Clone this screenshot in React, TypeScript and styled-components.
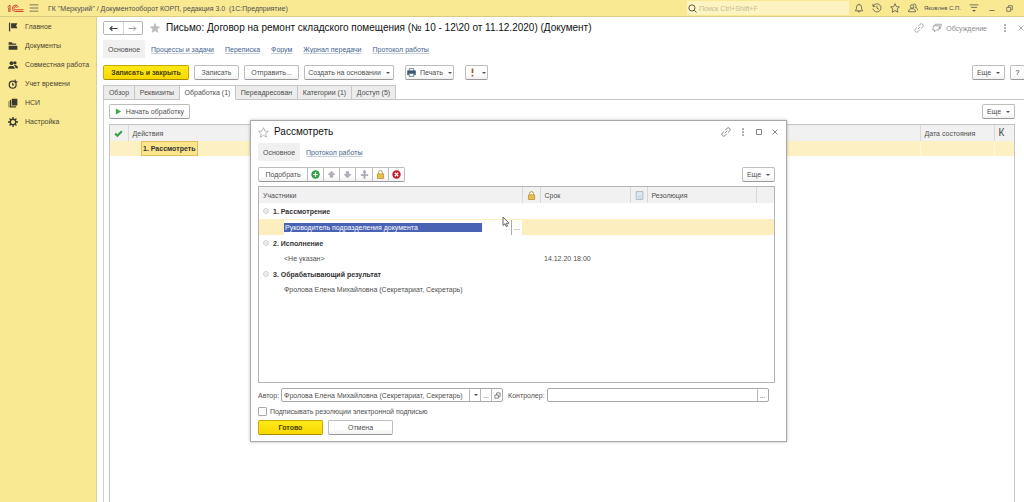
import React from 'react';
import styled, { createGlobalStyle, css } from 'styled-components';

const Global = createGlobalStyle`
  * { box-sizing: border-box; }
  body { margin: 0; font: 7px/9px "Liberation Sans", Arial, sans-serif; color: #4f4f4f; background: #fff; }
  button, input { font: inherit; color: inherit; margin: 0; }
  button { cursor: pointer; }
  svg { display: block; flex: none; }
`;

const Page = styled.div`
  position: relative;
  display: flex;
  flex-direction: column;
  min-height: 100vh;
  overflow: hidden;
`;

const PlainButton = styled.button`
  display: flex;
  align-items: center;
  justify-content: center;
  padding: 0;
  border: 0;
  background: none;
`;

const TopBar = styled.header`
  display: flex;
  align-items: center;
  height: 17px;
  padding: 0 10px 0 7px;
  background: #fae993;
  border-bottom: 1px solid #d9cb82;
`;
const AppTitle = styled.span`
  flex: 1;
  margin-left: 9px;
  white-space: nowrap;
`;
const Menu = styled(PlainButton)`
  margin-left: 5px;
`;
const Search = styled.label`
  display: flex;
  align-items: center;
  gap: 2px;
  width: 162px;
  height: 14px;
  padding-left: 1px;
  background: #fdf4c1;
  margin-right: 5px;
`;
const SearchInput = styled.input`
  flex: 1;
  min-width: 0;
  padding: 0;
  border: 0;
  outline: 0;
  background: none;
  &::placeholder { color: #c4bc94; opacity: 1; }
`;
const BarIcons = styled.div`
  display: flex;
  align-items: center;
  gap: 8px;
`;
const User = styled.span`
  width: 37px;
  margin-left: -2px;
  font-size: 6px;
  white-space: nowrap;
`;

const Body = styled.div`
  display: flex;
  flex: 1;
`;
const Sidebar = styled.nav`
  flex: none;
  width: 97px;
  background: #fae993;
  border-right: 1px solid #d9cf9a;
`;
const SideLink = styled.a`
  display: flex;
  align-items: center;
  gap: 7px;
  height: 19px;
  padding-left: 8px;
  color: #4a4630;
  text-decoration: none;
  white-space: nowrap;
`;

const Main = styled.main`
  display: flex;
  flex-direction: column;
  flex: 1;
  min-width: 0;
  padding-top: 4px;
`;
const TitleRow = styled.div`
  display: flex;
  align-items: center;
  height: 14px;
  padding-left: 6px;
`;
const History = styled.div`
  display: flex;
  width: 40px;
  height: 14px;
  margin-right: 6px;
  border: 1px solid #b5b5b5;
  border-radius: 2px;
  & > button { flex: 1; }
  & > button + button { border-left: 1px solid #d5d5d5; }
`;
const Title = styled.h1`
  flex: 1;
  margin: 0 0 0 5px;
  font-size: 10px;
  line-height: 14px;
  font-weight: 400;
  color: #111;
  white-space: nowrap;
`;
const TitleTools = styled.div`
  display: flex;
  align-items: center;
  gap: 8px;
  margin-right: -1px;
  color: #8d8d8d;
`;
const Discuss = styled(PlainButton)`
  gap: 4px;
  margin-right: 6px;
`;

const Nav = styled.nav<{ $gap: number }>`
  display: flex;
  align-items: center;
  gap: ${p => p.$gap}px;
`;
const MainNav = styled(Nav)`
  margin: 5px 0 7px 6px;
`;
const NavCurrent = styled.span`
  padding: 5px 5px 4px;
  margin-right: -5px;
  background: #f0f0f0;
`;
const NavLink = styled.a`
  color: #44638f;
  text-decoration: underline #c3cfde 1px;
  text-underline-offset: 1px;
  white-space: nowrap;
`;

const Button = styled.button<{ $w: number; $primary?: boolean }>`
  display: flex;
  align-items: center;
  justify-content: center;
  gap: 4px;
  flex: none;
  width: ${p => p.$w}px;
  height: 15px;
  padding: 0;
  border: 1px solid #bdbdbd;
  border-bottom-color: #999;
  border-radius: 2px;
  background: linear-gradient(#fff 60%, #f1f1f1);
  white-space: nowrap;
  ${p => p.$primary && css`
    font-weight: 700;
    color: #4a4000;
    border-color: #c9a800;
    border-bottom-color: #a58a00;
    background: linear-gradient(#ffe91a, #f8d800);
  `}
`;
const CommandBar = styled.div`
  display: flex;
  gap: 5px;
  padding-left: 6px;
`;
const Gap = styled.span<{ $grow?: boolean }>`
  ${p => (p.$grow ? 'flex: 1;' : 'width: 1px;')}
`;
const Clip = styled(Button)`
  margin-right: -1px;
  color: #222;
`;

const Tabs = styled.div`
  display: flex;
  height: 15px;
  margin: 5px 0 0 6px;
  border-bottom: 1px solid #c6c6c6;
`;
const Tab = styled.button<{ $w: number; $on?: boolean }>`
  width: ${p => p.$w}px;
  height: 15px;
  padding: 0;
  border: 1px solid #c6c6c6;
  border-left-width: 0;
  background: ${p => (p.$on ? '#fff' : '#ececec')};
  white-space: nowrap;
  ${p => p.$on && 'border-bottom-color: #fff;'}
  &:first-child { border-left-width: 1px; }
`;

const Panel = styled.section`
  display: flex;
  flex-direction: column;
  flex: 1;
  margin-left: 6px;
  padding: 4px 9px 0 5px;
  border-left: 1px solid #cfcfcf;
`;
const Split = styled.div`
  display: flex;
  justify-content: space-between;
`;

const Table = styled.table`
  width: 100%;
  border-collapse: collapse;
  table-layout: fixed;
  th, td { padding: 0 0 0 4px; text-align: left; font-weight: 400; white-space: nowrap; }
  th { height: 16px; background: #f1f1f1; border-right: 1px solid #d8d8d8; }
  th:last-child { border-right: 0; }
`;
const ActionsFrame = styled.div`
  flex: 1;
  margin-top: 5px;
  border: 1px solid #c4c4c4;
  border-bottom: 0;
`;
const ActionRow = styled.tr`
  height: 15px;
  background: #fdf0c3;
  & > td + td + td { border-left: 1px solid #fff8e0; }
`;
const Mark = styled.span`
  font-size: 10px;
  line-height: 10px;
  color: #444;
`;
const Marked = styled.span`
  display: block;
  width: max-content;
  margin-left: 9px;
  padding: 2px 2px 2px 1px;
  font-weight: 700;
  background: #fce48c;
  border: 1px solid #dfc05a;
  color: #333;
`;

const Dialog = styled.section`
  position: absolute;
  top: 120px;
  left: 250px;
  width: 537px;
  padding: 4px 11px 6px 7px;
  background: #fff;
  border: 1px solid #a9a9a9;
  box-shadow: 0 0 3px #0004;
`;
const DialogHead = styled.div`
  display: flex;
  align-items: center;
  height: 14px;
  gap: 5px;
`;
const DialogTitle = styled.h2`
  flex: 1;
  margin: 0;
  font-size: 10px;
  line-height: 14px;
  font-weight: 400;
  color: #111;
`;
const WindowTools = styled.div`
  display: flex;
  align-items: center;
  gap: 8px;
  margin-right: -4px;
  color: #666;
`;
const DialogNav = styled(Nav)`
  margin: 4px 0 6px;
`;
const Group = styled.div`
  display: flex;
  & > button { border-radius: 0; border-right-width: 0; }
  & > button:first-child { border-radius: 2px 0 0 2px; }
  & > button:last-child { border-radius: 0 2px 2px 0; border-right-width: 1px; }
`;
const MembersFrame = styled.div`
  height: 197px;
  margin-top: 4px;
  border: 1px solid #b4b4b4;
`;
const StageRow = styled.tr`
  height: 16px;
`;
const MemberRow = styled.tr<{ $on?: boolean }>`
  height: ${p => (p.$on ? 16 : 15)}px;
  ${p => p.$on && 'background: #fdeec0;'}
`;
const Stage = styled.b`
  display: flex;
  align-items: center;
  gap: 4px;
  color: #333;
`;
const Member = styled.span`
  display: block;
  padding-left: 21px;
`;
const EditCell = styled.div`
  display: flex;
  align-items: center;
  height: 15px;
  margin-left: 21px;
  background: #fff;
`;
const EditInput = styled.input`
  width: 198px;
  height: 9px;
  padding: 0 0 0 1px;
  border: 0;
  outline: 0;
  color: #fff;
  background: #4a62b4;
`;
const EditMore = styled(PlainButton)`
  width: 11px;
  height: 15px;
  margin-left: auto;
  border-left: 1px solid #aaa;
`;

const Fields = styled.div`
  display: flex;
  align-items: center;
  margin-top: 5px;
`;
const FieldLabel = styled.label`
  margin-right: 2px;
  white-space: nowrap;
`;
const Field = styled.div`
  display: flex;
  width: 222px;
  height: 14px;
  margin-right: 5px;
  border: 1px solid #a8a8a8;
  border-radius: 2px;
  & > input { flex: 1; min-width: 0; padding: 0 0 0 2px; border: 0; outline: 0; background: none; }
  & > button { width: 11px; border-left: 1px solid #b8b8b8; }
`;
const Check = styled.label`
  display: flex;
  align-items: center;
  gap: 3px;
  margin-top: 5px;
  & > input {
    appearance: none;
    width: 9px;
    height: 9px;
    border: 1px solid #aaa;
    border-radius: 1px;
  }
`;
const Actions = styled.div`
  display: flex;
  gap: 5px;
  margin-top: 4px;
`;
const Pointer = styled.svg`
  position: absolute;
  top: 95px;
  left: 251px;
`;
const Caret = styled.i`
  border: 2px solid transparent;
  border-top-color: currentColor;
  border-bottom-width: 0;
  margin-left: 1px;
`;

type IconProps = { s?: number; children: React.ReactNode; color?: string; sw?: number };
const Icon = ({ s = 10, children, color = 'currentColor', sw = 1.2 }: IconProps) => (
  <svg width={s} height={s} viewBox="0 0 16 16" fill="none" stroke={color} strokeWidth={sw} aria-hidden="true">
    {children}
  </svg>
);
const starPath = 'M8 1l2.1 4.8 5 .5-3.8 3.4 1.2 5.1L8 12.100l-4.500 2.700 1.200-5.100L.9 6.300l5-.5z';

const Logo = () => (
  <svg width="17" height="9" viewBox="0 0 34 18" fill="none" stroke="#d4442f" strokeWidth="2" aria-label="1C">
    <path d="M1 6l5-4v14M3.500 7v9" />
    <path d="M23 6.500a6.300 6.300 0 1 0-6 8.500H33M19.800 7.500a3 3 0 1 0-2.800 4H33" />
  </svg>
);
const Link = () => (
  <Icon sw={1.2}>
    <path d="M6 10l4-4M7 5l2.500-2.800a2.900 2.900 0 0 1 4.300 4.200L11 9M9 11l-2.500 2.800a2.900 2.900 0 0 1-4.300-4.200L5 7" />
  </Icon>
);
const Dots = () => (
  <Icon s={8} color="none"><g fill="#666"><circle cx="8" cy="2" r="1.700" /><circle cx="8" cy="8" r="1.700" /><circle cx="8" cy="14" r="1.700" /></g></Icon>
);
const Close = () => <Icon s={8} sw={1.5}><path d="M3 3l10 10M13 3L3 13" /></Icon>;
const Lock = () => (
  <Icon s={9} color="#b8923a" sw={1.6}><path d="M4.500 7V4.500a3.500 3.500 0 0 1 7 0V7" /><path fill="#f0ca55" d="M2.500 7h11v8h-11z" /><path d="M3 11h10" stroke="#dcb040" /></Icon>
);
const Minus = () => (
  <Icon s={6} color="#999" sw={1.4}><circle cx="8" cy="8" r="6.500" fill="#fff" /><path d="M4.500 8h7" /></Icon>
);
const Arrow = ({ d }: { d: string }) => (
  <Icon s={9} color="#999da5" sw={1}><path fill="#aeb2ba" d={d} /></Icon>
);

const sideItems: [string, React.ReactNode][] = [
  ['Главное', <><path d="M2.500 1v14" strokeWidth="2" /><path d="M5 2h10l-2 4 2 4H5z" fill="#3c3a30" stroke="none" /></>],
  ['Документы', <path d="M1 2h5l1.500 2H13v2H1zM1 7.500h14V14H1z" fill="#3c3a30" stroke="none" />],
  ['Совместная работа', <g fill="#3c3a30" stroke="none"><circle cx="5.500" cy="5" r="3" /><circle cx="11" cy="4.500" r="2.700" /><path d="M0 14c0-3 2-4 4-4.500h3c2 .5 4 1.500 4 4.500zM9 8h3c2.500 1 4 2 4 5h-4c0-2-1-3.500-3-5z" /></g>],
  ['Учет времени', <><circle cx="7.500" cy="9" r="5.500" strokeWidth="2" /><path d="M7.500 6v3.500H10M11 1l1 3 3 1" strokeWidth="1.800" /></>],
  ['НСИ', <g fill="#3c3a30" stroke="none"><path d="M6 1h9v11H6zM3 3h2v10h8v2H3zM1 5h1v10H1z" /></g>],
  ['Настройка', <><circle cx="8" cy="8" r="4.500" strokeWidth="2.400" /><path d="M8 0v4M8 12v4M0 8h4M12 8h4M2.500 2.500l2.500 2.500M11 11l2.500 2.500M13.500 2.500L11 5M5 11l-2.500 2.500" strokeWidth="2.200" /></>],
];

export default function App() {
  return (
    <Page>
      <Global />
      <TopBar>
        <Logo />
        <Menu aria-label="Меню"><Icon><path d="M1 3h14M1 8h14M1 13h14" /></Icon></Menu>
        <AppTitle>ГК "Меркурий" / Документооборот КОРП, редакция 3.0&nbsp; (1С:Предприятие)</AppTitle>
        <Search>
          <Icon s={9} sw={1.7}><circle cx="7" cy="7" r="5.500" /><path d="M11 11l4 4" /></Icon>
          <SearchInput placeholder="Поиск Ctrl+Shift+F" aria-label="Поиск" />
        </Search>
        <BarIcons>
          <PlainButton aria-label="Уведомления"><Icon><path d="M2 12.500c2-2 2-4 2-6a4 4 0 0 1 8 0c0 2 0 4 2 6zM6.500 13a1.500 1.500 0 0 0 3 0M8 1v2" /></Icon></PlainButton>
          <PlainButton aria-label="История"><Icon><path d="M2 5a6.500 6.500 0 1 1-.5 4M1.500 1.500V5.500H5.500M8 4.500V8.500l3 1.500" /></Icon></PlainButton>
          <PlainButton aria-label="Избранное"><Icon><path d={starPath} /></Icon></PlainButton>
          <PlainButton aria-label="Пользователи"><Icon><circle cx="6.500" cy="5.500" r="2.700" /><path d="M1 14c0-4 2-5 5.500-5s5.500 1 5.500 5zM8.500 2a2.700 2.700 0 1 1 3 5c2.500.5 4 2 4 5" /></Icon></PlainButton>
          <User>Яковлев С.П.</User>
          <PlainButton aria-label="Настройка панели"><Icon><path d="M1 3h14M3 7h10" /><path d="M5 11h6l-3 3z" fill="currentColor" stroke="none" /></Icon></PlainButton>
          <PlainButton aria-label="Свернуть"><Icon><path d="M4 12h8" /></Icon></PlainButton>
          <PlainButton aria-label="Восстановить"><Icon s={9}><path d="M3 6h7v7H3zM6 6V3h7v7h-3" /></Icon></PlainButton>
        </BarIcons>
      </TopBar>
      <Body>
        <Sidebar>
          {sideItems.map(([name, art]) => (
            <SideLink href="#" key={name}><Icon color="#3c3a30">{art}</Icon>{name}</SideLink>
          ))}
        </Sidebar>
        <Main>
          <TitleRow>
            <History>
              <PlainButton aria-label="Назад"><Icon s={9} color="#444" sw={2.2}><path d="M15 8H2M6 4L2 8l4 4" /></Icon></PlainButton>
              <PlainButton aria-label="Вперед"><Icon s={9} color="#999" sw={1.7}><path d="M1 8h13M10 4l4 4-4 4" /></Icon></PlainButton>
            </History>
            <Icon s={12} color="none"><path d={starPath} fill="#bdbdbd" /></Icon>
            <Title>Письмо: Договор на ремонт складского помещения (№ 10 - 12\20 от 11.12.2020) (Документ)</Title>
            <TitleTools>
              <PlainButton aria-label="Ссылка"><Link /></PlainButton>
              <Discuss><Icon><path d="M5 2h10l-1.500 7H11M5 2L4 4M2.500 4.500h9.500l-1.200 6.500H7l-3 3v-3H1.300z" /></Icon>Обсуждение</Discuss>
              <PlainButton aria-label="Ещё"><Dots /></PlainButton>
              <PlainButton aria-label="Закрыть"><Close /></PlainButton>
            </TitleTools>
          </TitleRow>
          <MainNav $gap={11}>
            <NavCurrent>Основное</NavCurrent>
            {['Процессы и задачи', 'Переписка', 'Форум', 'Журнал передачи', 'Протокол работы'].map(t => <NavLink href="#" key={t}>{t}</NavLink>)}
          </MainNav>
          <CommandBar>
            <Button $primary $w={86}>Записать и закрыть</Button>
            <Button $w={45}>Записать</Button>
            <Button $w={55}>Отправить...</Button>
            <Button $w={90}>Создать на основании<Caret /></Button>
            <Gap />
            <Button $w={49}><Icon s={9} color="#3d5872"><path d="M4 5V1h8v4M4 10h8v5H4z" /><path d="M1 5h14v7h-2V9H3v3H1z" fill="#3d5872" /></Icon>Печать<Caret /></Button>
            <Gap />
            <Button $w={23}><Icon s={9} color="#b5532a" sw={3}><path d="M8 1v8M8 12v3" /></Icon><Caret /></Button>
            <Gap $grow />
            <Button $w={33}>Еще<Caret /></Button>
            <Clip $w={15}>?</Clip>
          </CommandBar>
          <Tabs role="tablist">
            <Tab role="tab" $w={32}>Обзор</Tab>
            <Tab role="tab" $w={45}>Реквизиты</Tab>
            <Tab role="tab" $w={56} $on aria-selected>Обработка (1)</Tab>
            <Tab role="tab" $w={62}>Переадресован</Tab>
            <Tab role="tab" $w={54}>Категории (1)</Tab>
            <Tab role="tab" $w={44}>Доступ (5)</Tab>
          </Tabs>
          <Panel>
            <Split>
              <Button $w={81}><Icon s={7} color="none"><path d="M2 1l12 7-12 7z" fill="#3fa548" /></Icon>Начать обработку</Button>
              <Button $w={33}>Еще<Caret /></Button>
            </Split>
            <ActionsFrame>
              <Table>
                <colgroup><col style={{ width: 18 }} /><col /><col style={{ width: 74 }} /><col style={{ width: 20 }} /></colgroup>
                <thead><tr>
                  <th><Icon s={9} color="#36a043" sw={3.5}><path d="M2 8l4 4 8-8" /></Icon></th>
                  <th>Действия</th><th>Дата состояния</th><th><Mark>К</Mark></th>
                </tr></thead>
                <tbody><ActionRow><td /><td><Marked>1. Рассмотреть</Marked></td><td /><td /></ActionRow></tbody>
              </Table>
            </ActionsFrame>
          </Panel>
        </Main>
      </Body>

      <Dialog role="dialog" aria-label="Рассмотреть">
        <DialogHead>
          <Icon s={11} color="#999" sw={1}><path d={starPath} /></Icon>
          <DialogTitle>Рассмотреть</DialogTitle>
          <WindowTools>
            <PlainButton aria-label="Ссылка"><Link /></PlainButton>
            <PlainButton aria-label="Ещё"><Dots /></PlainButton>
            <PlainButton aria-label="Развернуть"><Icon s={8} sw={1.6}><path d="M3 3h10v10H3z" /></Icon></PlainButton>
            <PlainButton aria-label="Закрыть"><Close /></PlainButton>
          </WindowTools>
        </DialogHead>
        <DialogNav $gap={11}>
          <NavCurrent>Основное</NavCurrent>
          <NavLink href="#">Протокол работы</NavLink>
        </DialogNav>
        <Split>
          <Group>
            <Button $w={49}>Подобрать</Button>
            <Button $w={16} aria-label="Добавить"><Icon s={9} color="#fff" sw={2.2}><circle cx="8" cy="8" r="7.500" fill="#35a04a" stroke="none" /><path d="M8 4v8M4 8h8" /></Icon></Button>
            <Button $w={16} aria-label="Вверх"><Arrow d="M8 2l6 6h-3.500v5h-5V8H2z" /></Button>
            <Button $w={16} aria-label="Вниз"><Arrow d="M8 14l6-6h-3.500V3h-5v5H2z" /></Button>
            <Button $w={17} aria-label="Разделить"><Arrow d="M8 0l3 4H9v4h5v2H9v5H7v-5H2V8h5V4H5z" /></Button>
            <Button $w={16} aria-label="Заблокировать"><Lock /></Button>
            <Button $w={17} aria-label="Удалить"><Icon s={9} color="#fff" sw={2.2}><circle cx="8" cy="8" r="7.500" fill="#c3202c" stroke="none" /><path d="M5 5l6 6M11 5l-6 6" /></Icon></Button>
          </Group>
          <Button $w={33}>Еще<Caret /></Button>
        </Split>
        <MembersFrame>
          <Table>
            <colgroup><col /><col style={{ width: 18 }} /><col style={{ width: 90 }} /><col style={{ width: 17 }} /><col style={{ width: 109 }} /><col style={{ width: 18 }} /></colgroup>
            <thead><tr>
              <th>Участники</th><th><Lock /></th><th>Срок</th>
              <th><Icon s={9} color="#8fa9b8"><path d="M2 1h12v14H2z" fill="#dce9f0" /><path d="M5 9h6M5 12h6" stroke="#b5cad6" /></Icon></th>
              <th>Резолюция</th><th />
            </tr></thead>
            <tbody>
              <StageRow><td colSpan={6}><Stage><Minus />1. Рассмотрение</Stage></td></StageRow>
              <MemberRow $on>
                <td><EditCell><EditInput defaultValue="Руководитель подразделения документа" aria-label="Участник" /><EditMore aria-label="Выбрать">...</EditMore></EditCell></td>
                <td /><td /><td /><td /><td />
              </MemberRow>
              <StageRow><td colSpan={6}><Stage><Minus />2. Исполнение</Stage></td></StageRow>
              <MemberRow><td><Member>&lt;Не указан&gt;</Member></td><td /><td>14.12.20 18:00</td><td /><td /><td /></MemberRow>
              <StageRow><td colSpan={6}><Stage><Minus />3. Обрабатывающий результат</Stage></td></StageRow>
              <MemberRow><td colSpan={6}><Member>Фролова Елена Михайловна (Секретариат, Секретарь)</Member></td></MemberRow>
            </tbody>
          </Table>
        </MembersFrame>
        <Fields>
          <FieldLabel htmlFor="author">Автор:</FieldLabel>
          <Field>
            <input id="author" defaultValue="Фролова Елена Михайловна (Секретариат, Секретарь)" />
            <PlainButton aria-label="Список"><Caret /></PlainButton>
            <PlainButton aria-label="Выбрать">...</PlainButton>
            <PlainButton aria-label="Открыть"><Icon s={7} sw={1.5}><path d="M2 7h8v7H2zM6 7V2h8v8h-4" /></Icon></PlainButton>
          </Field>
          <FieldLabel htmlFor="controller">Контролер:</FieldLabel>
          <Field><input id="controller" /><PlainButton aria-label="Выбрать">...</PlainButton></Field>
        </Fields>
        <Check><input type="checkbox" />Подписывать резолюции электронной подписью</Check>
        <Actions>
          <Button $primary $w={65}>Готово</Button>
          <Button $w={65}>Отмена</Button>
        </Actions>
        <Pointer width="8" height="12" viewBox="0 0 8 12" fill="#fff" stroke="#555" strokeWidth="0.900"><path d="M1 1v8.500l2-1.800 1.300 3 1.300-.6-1.300-2.900H7z" /></Pointer>
      </Dialog>
    </Page>
  );
}
